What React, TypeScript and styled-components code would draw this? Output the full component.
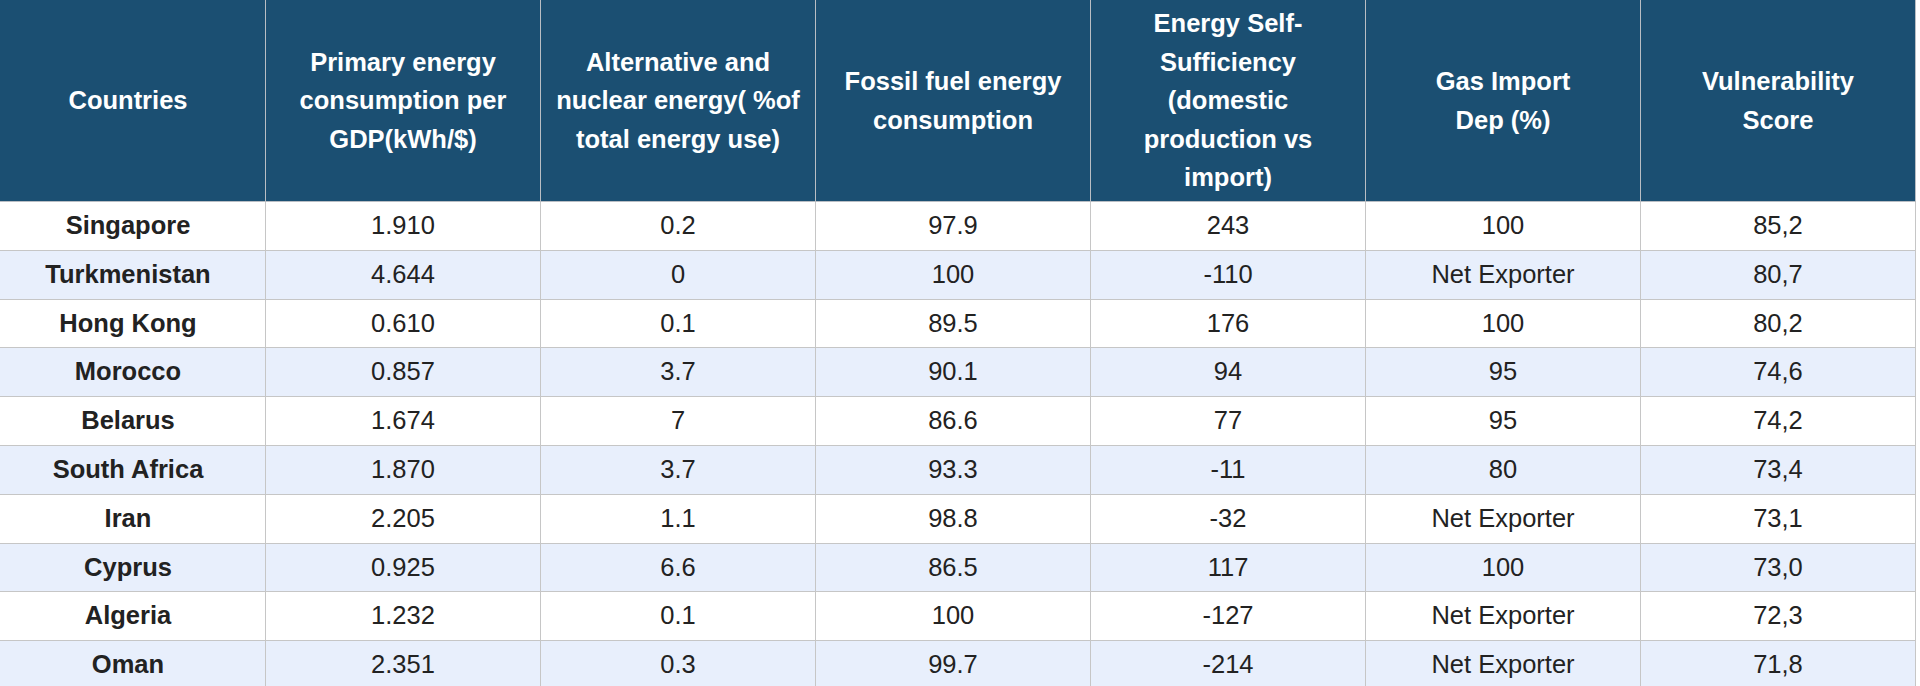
import React from "react";
import styled, { createGlobalStyle } from "styled-components";

const GlobalStyle = createGlobalStyle`
  html, body {
    margin: 0;
    padding: 0;
    background: #ffffff;
    overflow: hidden;
  }
  body {
    font-family: "Liberation Sans", Arial, Helvetica, sans-serif;
  }
`;

type Row = {
  country: string;
  intensity: string;
  alternative: string;
  fossil: string;
  selfSufficiency: string;
  gasImport: string;
  score: string;
};

const ROWS: Row[] = [
  { country: "Singapore", intensity: "1.910", alternative: "0.2", fossil: "97.9", selfSufficiency: "243", gasImport: "100", score: "85,2" },
  { country: "Turkmenistan", intensity: "4.644", alternative: "0", fossil: "100", selfSufficiency: "-110", gasImport: "Net Exporter", score: "80,7" },
  { country: "Hong Kong", intensity: "0.610", alternative: "0.1", fossil: "89.5", selfSufficiency: "176", gasImport: "100", score: "80,2" },
  { country: "Morocco", intensity: "0.857", alternative: "3.7", fossil: "90.1", selfSufficiency: "94", gasImport: "95", score: "74,6" },
  { country: "Belarus", intensity: "1.674", alternative: "7", fossil: "86.6", selfSufficiency: "77", gasImport: "95", score: "74,2" },
  { country: "South Africa", intensity: "1.870", alternative: "3.7", fossil: "93.3", selfSufficiency: "-11", gasImport: "80", score: "73,4" },
  { country: "Iran", intensity: "2.205", alternative: "1.1", fossil: "98.8", selfSufficiency: "-32", gasImport: "Net Exporter", score: "73,1" },
  { country: "Cyprus", intensity: "0.925", alternative: "6.6", fossil: "86.5", selfSufficiency: "117", gasImport: "100", score: "73,0" },
  { country: "Algeria", intensity: "1.232", alternative: "0.1", fossil: "100", selfSufficiency: "-127", gasImport: "Net Exporter", score: "72,3" },
  { country: "Oman", intensity: "2.351", alternative: "0.3", fossil: "99.7", selfSufficiency: "-214", gasImport: "Net Exporter", score: "71,8" },
];

// header lines are broken by hand so they wrap like the original
const HEADERS: string[][] = [
  ["Countries"],
  ["Primary energy", "consumption per", "GDP(kWh/$)"],
  ["Alternative and", "nuclear energy( %of", "total energy use)"],
  ["Fossil fuel energy", "consumption"],
  ["Energy Self-", "Sufficiency", "(domestic", "production vs", "import)"],
  ["Gas Import", "Dep (%)"],
  ["Vulnerability", "Score"],
];

export default function App() {
  return (
    <>
      <GlobalStyle />
      <Page>
        <Table>
          <colgroup>
            {HEADERS.map((_, i) => (
              <col key={i} />
            ))}
          </colgroup>
          <thead>
            <tr>
              {HEADERS.map((lines, i) => (
                <HeadCell key={i}>
                  {lines.map((line, j) => (
                    <HeadLine key={j}>{line}</HeadLine>
                  ))}
                </HeadCell>
              ))}
            </tr>
          </thead>
          <tbody>
            {ROWS.map((r, i) => (
              <BodyRow key={r.country} $striped={i % 2 === 1}>
                <Cell $bold>{r.country}</Cell>
                <Cell>{r.intensity}</Cell>
                <Cell>{r.alternative}</Cell>
                <Cell>{r.fossil}</Cell>
                <Cell>{r.selfSufficiency}</Cell>
                <Cell>{r.gasImport}</Cell>
                <Cell>{r.score}</Cell>
              </BodyRow>
            ))}
          </tbody>
        </Table>
      </Page>
    </>
  );
}

const Page = styled.div`
  width: 1920px;
  height: 686px;
  overflow: hidden;
`;

const Table = styled.table`
  width: 1926px;
  margin-left: -10px;
  margin-top: -1px;
  border-collapse: collapse;
  table-layout: fixed;
  font-family: "Liberation Sans", Arial, Helvetica, sans-serif;
  font-size: 25.5px;

  col {
    width: 275px;
  }
`;

const HeadCell = styled.th`
  background: #1b4f72;
  color: #ffffff;
  font-weight: 700;
  text-align: center;
  vertical-align: middle;
  height: 193px;
  padding: 4px 10px;
  line-height: 38.6px;
  border: 1px solid #b9bec4;
`;

const HeadLine = styled.span`
  display: block;
  white-space: nowrap;
`;

const BodyRow = styled.tr<{ $striped?: boolean }>`
  background: ${(p) => (p.$striped ? "#e8effc" : "#ffffff")};
`;

const Cell = styled.td<{ $bold?: boolean }>`
  color: #222222;
  font-weight: ${(p) => (p.$bold ? 700 : 400)};
  text-align: center;
  vertical-align: middle;
  padding: 5px 10px;
  line-height: 37.8px;
  white-space: nowrap;
  border: 1px solid #c6c6c6;
`;
